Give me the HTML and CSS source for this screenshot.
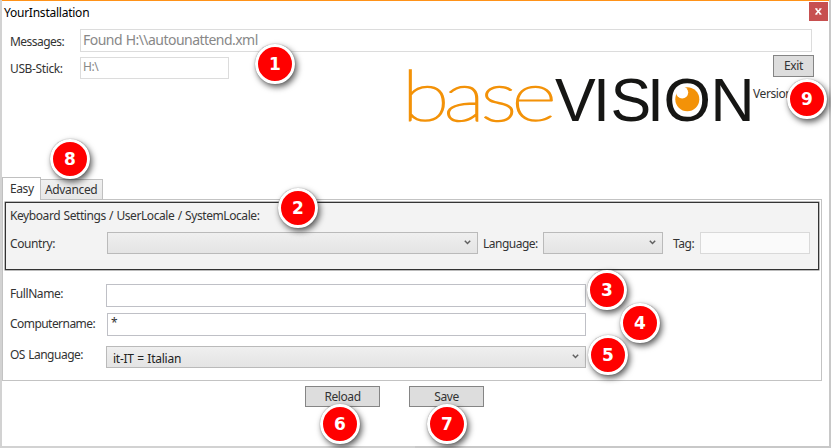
FILE: index.html
```html
<!DOCTYPE html>
<html lang="en">
<head>
<meta charset="utf-8">
<title>YourInstallation</title>
<link rel="stylesheet" href="styles.css">
</head>
<body>
<main class="window">
  <header class="titlebar"><span class="title">YourInstallation</span><button class="close" aria-label="Close"><svg width="7" height="7" viewBox="0 0 7 7"><path d="M1 1l4.6 5M5.6 1L1 6" stroke="#fff" stroke-width="1.6"/><path d="M0 .7h2.5M4.3.7h2.4M0 6.2h2.5M4.3 6.2h2.4" stroke="#fff" stroke-width=".8"/></svg></button></header>
  <section class="top">
    <div class="row messages"><label class="messages-label">Messages:</label><div class="input message-box">Found H:\\autounattend.xml</div></div>
    <div class="row info">
      <label class="usb-label">USB-Stick:</label><div class="input usb-box">H:\</div>
      <svg class="logo" width="345" height="60" viewBox="0 0 345 60" role="img">
        <text class="logo-base" transform="scale(1.25 1)" x="-4.3 29.3 58.8 83.6" y="53.5">base</text>
        <text class="logo-vision" x="148 186 203.5 240 256.5 303.5" y="53.5">VISION</text>
        <circle cx="280.3" cy="32.3" r="12" fill="#f39208"/>
        <circle cx="275.2" cy="25.5" r="6" fill="#fff"/>
      </svg>
      <div class="exit-area"><button class="button exit">Exit</button><span class="version">Version</span></div>
    </div>
  </section>
  <nav class="tabs"><span class="tab active"><span class="easy">Easy</span></span><span class="tab idle"><span class="advanced">Advanced</span></span></nav>
  <section class="panel">
    <fieldset class="group">
      <div class="group-title">Keyboard Settings / UserLocale / SystemLocale:</div>
      <div class="row locale">
        <label class="country-label">Country:</label><div class="select country"><svg class="arrow" viewBox="0 0 7 5"><path d="M.8.8L3.5 3.5 6.2.8"/></svg></div>
        <label class="language-label">Language:</label><div class="select language"><svg class="arrow" viewBox="0 0 7 5"><path d="M.8.8L3.5 3.5 6.2.8"/></svg></div>
        <label class="tag-label">Tag:</label><div class="input tag"></div>
      </div>
    </fieldset>
    <div class="row full"><label class="full-label">FullName:</label><div class="input field"></div></div>
    <div class="row computer"><label class="computer-label">Computername:</label><div class="input field">*</div></div>
    <div class="row os"><label class="os-label">OS Language:</label><div class="select field"><span class="value">it-IT = Italian</span><svg class="arrow" viewBox="0 0 7 5"><path d="M.8.8L3.5 3.5 6.2.8"/></svg></div></div>
  </section>
  <footer class="actions"><button class="button"><span class="reload">Reload</span></button><button class="button"><span class="save">Save</span></button></footer>
</main>
<span class="badge b1">1</span><span class="badge b2">2</span><span class="badge b3">3</span><span class="badge b4">4</span><span class="badge b5">5</span><span class="badge b6">6</span><span class="badge b7">7</span><span class="badge b8">8</span><span class="badge b9">9</span>
</body>
</html>
```
FILE: styles.css
```css
* { box-sizing: border-box; }
body { margin: 0; width: 831px; height: 448px; overflow: hidden; position: relative; background: linear-gradient(90deg, #d2d2d2 0 50%, #c8c8c8 50%); font: 12px/16px "Noto Sans", sans-serif; color: #333; letter-spacing: -.42px; word-spacing: .6px; }
.window { width: 827px; height: 446px; margin-left: 2px; background: #fff; border-top: 1px solid #ff9218; }
button { font: inherit; letter-spacing: inherit; color: inherit; padding: 0; }
.row { display: flex; }
label { flex: none; white-space: nowrap; }
.titlebar { height: 28px; display: flex; justify-content: space-between; color: #000; }
.title { padding: 4px 0 0 2px; letter-spacing: -.24px; }
.close { width: 19px; height: 19px; margin: 1px 1px 0 0; border: 0; background: #c75050; display: flex; align-items: center; justify-content: center; }
.input { border: 1px solid #abadb3; background: #fff; white-space: nowrap; }
.top { height: 148px; }
.top label { width: 78px; padding-left: 8px; letter-spacing: -.5px; }
.messages-label { padding-top: 5px; }
.message-box { width: 732px; height: 23px; border-color: #dcdcdc; padding: 2px; font-size: 14px; color: #888; letter-spacing: -.54px; }
.usb-label { padding-top: 4px; }
.top .messages-label { letter-spacing: -.55px; }
.top .usb-label { letter-spacing: -.38px; }
.info { margin-top: 5px; }
.usb-box { width: 149px; height: 22px; border-color: #dcdcdc; color: #888; padding: 1px 2px; }
.logo { margin: 10px 0 0 178px; flex: none; overflow: visible; }
.logo-base { font: 100 70px Lato; fill: #f39208; stroke: #f39208; stroke-width: 1.6px; letter-spacing: 0; }
.logo-vision { font: 61px "Liberation Sans", sans-serif; fill: #161614; letter-spacing: 0; }
.exit-area { display: flex; flex-direction: column; margin: -2px 0 0 1px; }
.button { width: 75px; height: 21px; background: #ddd; border: 1px solid #858585; }
.exit { width: 41px; height: 22px; margin-left: 20px; }
.version { margin-top: 9px; }
.tabs { display: flex; height: 23px; align-items: flex-end; position: relative; margin-bottom: -1px; }
.tab { border: 1px solid #c0c0c0; border-bottom: 0; white-space: nowrap; }
.active { height: 23px; width: 39px; background: #fff; padding: 3px 7px; }
.idle { width: 63px; height: 21px; margin-left: -1px; padding: 2px 4px; background: linear-gradient(#f0f0f0, #e7e7e7); border-bottom: 1px solid #c0c0c0; }
.advanced { letter-spacing: -.35px; }
.panel { width: 820px; height: 182px; border: 1px solid #c3c3c3; padding: 2px; }
.group { margin: 0; width: 814px; height: 68px; border: 1px solid #333; box-shadow: 0 0 0 .5px #777; background: #f3f3f3; padding: 5px 4px; min-width: 0; }
.group-title { height: 24px; white-space: nowrap; }
.locale label { padding-top: 4px; }
.country-label { width: 97px; }
.select { height: 22px; border: 1px solid #bababa; background: linear-gradient(#efefef, #e4e4e4); display: flex; align-items: center; padding: 0 6px; }
.arrow { width: 7px; height: 5px; margin-left: auto; fill: none; stroke: #606060; stroke-width: 1.5; margin-bottom: 1px; }
.country { width: 371px; }
.language-label { width: 65px; padding-left: 5px; letter-spacing: -.5px; }
.language { width: 120px; }
.tag-label { width: 37px; padding-left: 10px; }
.tag { width: 110px; height: 22px; background: #fafafa; border-color: #d9d9d9; }
.panel > .row label { width: 101px; padding-left: 5px; }
.full { margin-top: 14px; }
.field { width: 480px; height: 23px; }
.full .field, .computer .field { border-color: #bfc0c6; padding: 2px 3px; }
.full-label { padding-top: 2px; }
.computer { margin-top: 6px; }
.computer-label { padding-top: 3px; letter-spacing: -.55px; }
.panel > .computer label { width: 102px; }
.computer .field { width: 479px; padding-top: 1px; }
.os { margin-top: 10px; }
.os-label { padding-top: 1px; letter-spacing: -.5px; }
.os .field { height: 22px; }
.value { padding-top: 3px; color: #222; letter-spacing: -.25px; }
.actions { display: flex; gap: 29px; padding: 5px 0 0 303px; }
.badge { position: absolute; width: 40px; height: 40px; border: 3.5px solid #fff; border-radius: 50%; background: red; color: #fff; box-shadow: 2px 3px 6px rgba(0,0,0,.65), 0 0 1px #777; font: bold 17px/34px "DejaVu Sans", sans-serif; letter-spacing: 0; text-align: center; }
.b1 { left: 255px; top: 44px; }
.b2 { left: 278px; top: 188px; }
.b3 { left: 587px; top: 270px; }
.b4 { left: 620px; top: 303px; }
.b5 { left: 588px; top: 335px; }
.b6 { left: 320px; top: 404px; }
.b7 { left: 427px; top: 404px; }
.b8 { left: 50px; top: 139px; }
.b9 { left: 787px; top: 79px; }
```
